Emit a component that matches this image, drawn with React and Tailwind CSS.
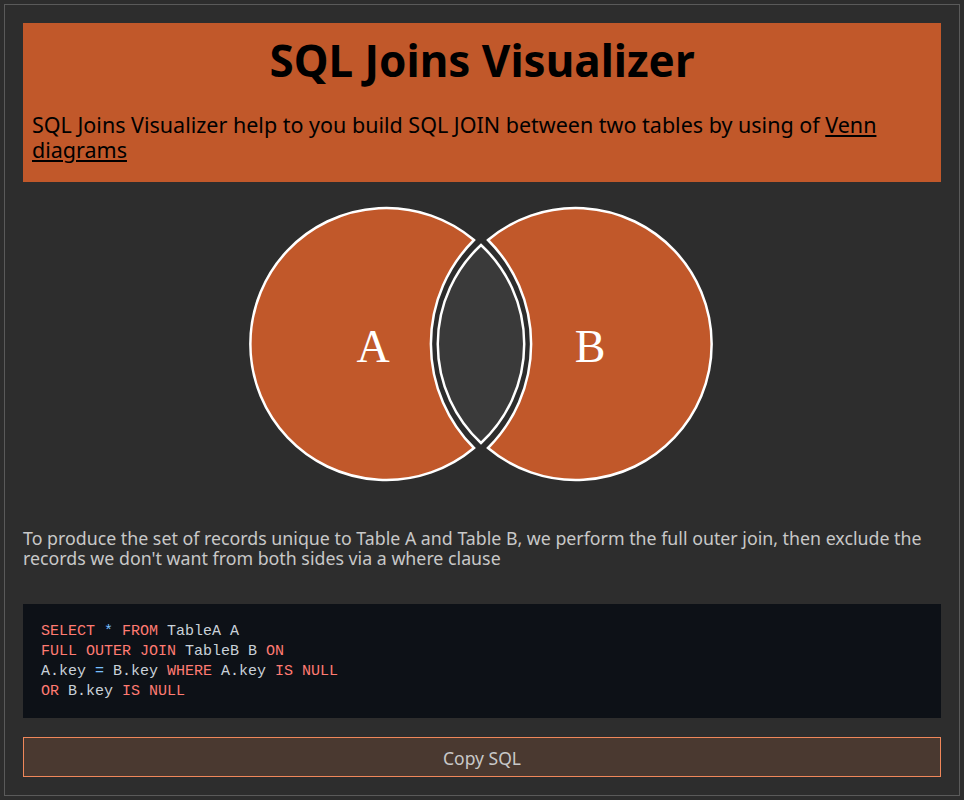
import React from "react";

const sans = { fontFamily: '"Noto Sans", "Open Sans", sans-serif' };

function Venn() {
  return (
    <svg
      width="918"
      height="347"
      viewBox="23 182 918 347"
      className="block"
    >
      {/* left crescent */}
      <path
        d="M474 240 A136 136 0 1 0 474 448 A147 147 0 0 1 474 240 Z"
        fill="#c1582a"
        stroke="#ffffff"
        strokeWidth="2.5"
        strokeLinejoin="miter"
      />
      {/* right crescent */}
      <path
        d="M488 240 A136 136 0 1 1 488 448 A147 147 0 0 0 488 240 Z"
        fill="#c1582a"
        stroke="#ffffff"
        strokeWidth="2.5"
        strokeLinejoin="miter"
      />
      {/* middle lens */}
      <path
        d="M481 245 A135 135 0 0 0 481 443 A135 135 0 0 0 481 245 Z"
        fill="#3a3a3a"
        stroke="#ffffff"
        strokeWidth="2.5"
      />
      <text
        x="373"
        y="362"
        textAnchor="middle"
        fill="#ffffff"
        fontSize="46"
        fontFamily='"Liberation Serif", serif'
      >
        A
      </text>
      <text
        x="590"
        y="362"
        textAnchor="middle"
        fill="#ffffff"
        fontSize="46"
        fontFamily='"Liberation Serif", serif'
      >
        B
      </text>
    </svg>
  );
}

export default function App() {
  return (
    <div className="min-h-screen bg-[#2d2d2d] p-1" style={sans}>
      <div className="border border-[#5a5a5a] p-[18px] flex flex-col">
        <header className="bg-[#c1582a] px-[9px] pt-[11px] pb-[20px] text-black">
          <h1 className="text-center text-[44px] font-bold leading-[53px]">
            SQL Joins Visualizer
          </h1>
          <p className="mt-[25px] text-[21.5px] leading-[25px]">
            SQL Joins Visualizer help to you build SQL JOIN between two tables by using of{" "}
            <a href="#" className="underline">
              Venn diagrams
            </a>
          </p>
        </header>

        <Venn />

        <p className="text-[17.8px] leading-[19.5px] text-[#c8c8c8]">
          To produce the set of records unique to Table A and Table B, we perform the full
          outer join, then exclude the records we don't want from both sides via a where clause
        </p>

        <pre
          className="mt-[36px] bg-[#0d1117] px-[18px] pt-[18px] pb-[16px] text-[15px] leading-[20px] text-[#c9d1d9]"
          style={{ fontFamily: '"Liberation Mono", "DejaVu Sans Mono", monospace' }}
        >
          <span className="text-[#ff7b72]">SELECT</span>{" "}
          <span className="text-[#79c0ff]">*</span>{" "}
          <span className="text-[#ff7b72]">FROM</span> TableA A{"\n"}
          <span className="text-[#ff7b72]">FULL OUTER JOIN</span> TableB B{" "}
          <span className="text-[#ff7b72]">ON</span>{"\n"}
          A.key <span className="text-[#79c0ff]">=</span> B.key{" "}
          <span className="text-[#ff7b72]">WHERE</span> A.key{" "}
          <span className="text-[#ff7b72]">IS NULL</span>{"\n"}
          <span className="text-[#ff7b72]">OR</span> B.key{" "}
          <span className="text-[#ff7b72]">IS NULL</span>
        </pre>

        <button className="mt-[19px] h-[40px] border border-[#f0875a] bg-[#4a3930] pt-[3px] text-[17.5px] text-[#c8c8c8]">
          Copy SQL
        </button>
      </div>
    </div>
  );
}
